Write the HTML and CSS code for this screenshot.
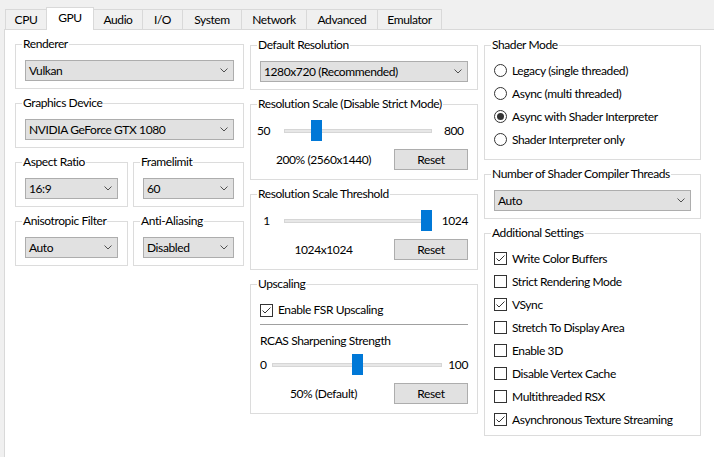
FILE: index.html
```html
<!DOCTYPE html>
<html>
<head>
<meta charset="utf-8">
<link rel="stylesheet" href="styles.css">
</head>
<body>
<div class="tabs">
  <div class="tab w-cpu">CPU</div>
  <div class="tab w-gpu active">GPU</div>
  <div class="tab w-audio">Audio</div>
  <div class="tab w-io">I/O</div>
  <div class="tab w-system">System</div>
  <div class="tab w-network">Network</div>
  <div class="tab w-adv">Advanced</div>
  <div class="tab w-emu">Emulator</div>
</div>
<div class="pane">
  <div class="col c1">
    <fieldset class="grp">
      <legend>Renderer</legend>
      <div class="combo"><span>Vulkan</span><svg class="chev" width="8" height="5" viewBox="0 0 8 5"><polyline points="0.5,0.5 4,4 7.5,0.5"/></svg></div>
    </fieldset>
    <fieldset class="grp">
      <legend>Graphics Device</legend>
      <div class="combo"><span>NVIDIA GeForce GTX 1080</span><svg class="chev" width="8" height="5" viewBox="0 0 8 5"><polyline points="0.5,0.5 4,4 7.5,0.5"/></svg></div>
    </fieldset>
    <div class="pair">
      <fieldset class="grp">
        <legend>Aspect Ratio</legend>
        <div class="combo"><span>16:9</span><svg class="chev" width="8" height="5" viewBox="0 0 8 5"><polyline points="0.5,0.5 4,4 7.5,0.5"/></svg></div>
      </fieldset>
      <fieldset class="grp">
        <legend>Framelimit</legend>
        <div class="combo"><span>60</span><svg class="chev" width="8" height="5" viewBox="0 0 8 5"><polyline points="0.5,0.5 4,4 7.5,0.5"/></svg></div>
      </fieldset>
    </div>
    <div class="pair">
      <fieldset class="grp">
        <legend>Anisotropic Filter</legend>
        <div class="combo"><span>Auto</span><svg class="chev" width="8" height="5" viewBox="0 0 8 5"><polyline points="0.5,0.5 4,4 7.5,0.5"/></svg></div>
      </fieldset>
      <fieldset class="grp">
        <legend>Anti-Aliasing</legend>
        <div class="combo"><span>Disabled</span><svg class="chev" width="8" height="5" viewBox="0 0 8 5"><polyline points="0.5,0.5 4,4 7.5,0.5"/></svg></div>
      </fieldset>
    </div>
  </div>

  <div class="col c2">
    <fieldset class="grp">
      <legend>Default Resolution</legend>
      <div class="combo"><span>1280x720 (Recommended)</span><svg class="chev" width="8" height="5" viewBox="0 0 8 5"><polyline points="0.5,0.5 4,4 7.5,0.5"/></svg></div>
    </fieldset>
    <fieldset class="grp sgrp">
      <legend>Resolution Scale (Disable Strict Mode)</legend>
      <div class="srow">
        <span class="lo">50</span>
        <div class="slider s-res"><div class="track"></div><div class="thumb" style="left:27px"></div></div>
        <span class="hi">800</span>
      </div>
      <div class="brow"><span class="val">200% (2560x1440)</span><div class="btn">Reset</div></div>
    </fieldset>
    <fieldset class="grp sgrp">
      <legend>Resolution Scale Threshold</legend>
      <div class="srow">
        <span class="lo">1</span>
        <div class="slider s-res"><div class="track"></div><div class="thumb" style="left:137px"></div></div>
        <span class="hi">1024</span>
      </div>
      <div class="brow"><span class="val">1024x1024</span><div class="btn">Reset</div></div>
    </fieldset>
    <fieldset class="grp ugrp">
      <legend>Upscaling</legend>
      <div class="chk"><span class="cb"><svg width="11" height="11" viewBox="0 0 11 11"><polyline points="1.5,5.5 4,8 9.5,2.5"/></svg></span>Enable FSR Upscaling</div>
      <div class="sep"></div>
      <div class="cap">RCAS Sharpening Strength</div>
      <div class="srow urow">
        <span class="lo2">0</span>
        <div class="slider s-up"><div class="track"></div><div class="thumb" style="left:80px"></div></div>
        <span class="hi2">100</span>
      </div>
      <div class="brow"><span class="val">50% (Default)</span><div class="btn">Reset</div></div>
    </fieldset>
  </div>

  <div class="col c3">
    <fieldset class="grp rgrp">
      <legend>Shader Mode</legend>
      <div class="opt"><span class="radio"></span>Legacy (single threaded)</div>
      <div class="opt"><span class="radio"></span>Async (multi threaded)</div>
      <div class="opt"><span class="radio on"></span>Async with Shader Interpreter</div>
      <div class="opt"><span class="radio"></span>Shader Interpreter only</div>
    </fieldset>
    <fieldset class="grp">
      <legend>Number of Shader Compiler Threads</legend>
      <div class="combo"><span>Auto</span><svg class="chev" width="8" height="5" viewBox="0 0 8 5"><polyline points="0.5,0.5 4,4 7.5,0.5"/></svg></div>
    </fieldset>
    <fieldset class="grp agrp">
      <legend>Additional Settings</legend>
      <div class="opt"><span class="cb"><svg width="11" height="11" viewBox="0 0 11 11"><polyline points="1.5,5.5 4,8 9.5,2.5"/></svg></span>Write Color Buffers</div>
      <div class="opt"><span class="cb"></span>Strict Rendering Mode</div>
      <div class="opt"><span class="cb"><svg width="11" height="11" viewBox="0 0 11 11"><polyline points="1.5,5.5 4,8 9.5,2.5"/></svg></span>VSync</div>
      <div class="opt"><span class="cb"></span>Stretch To Display Area</div>
      <div class="opt"><span class="cb"></span>Enable 3D</div>
      <div class="opt"><span class="cb"></span>Disable Vertex Cache</div>
      <div class="opt"><span class="cb"></span>Multithreaded RSX</div>
      <div class="opt"><span class="cb"><svg width="11" height="11" viewBox="0 0 11 11"><polyline points="1.5,5.5 4,8 9.5,2.5"/></svg></span>Asynchronous Texture Streaming</div>
    </fieldset>
  </div>
</div>
</body>
</html>
```
FILE: styles.css
```css
html, body {
  margin: 0;
  padding: 0;
}
body {
  background: #f0f0f0;
  font-family: Lato, "Liberation Sans", Arial, sans-serif;
  font-size: 12px;
  letter-spacing: -0.4px;
  line-height: 14px;
  color: #000;
  width: 714px;
  height: 457px;
  overflow: hidden;
}

/* Tabs */
.tabs {
  display: flex;
  align-items: flex-end;
  padding: 7px 0 0 5px;
  height: 22px;
}
.tab {
  box-sizing: border-box;
  height: 20px;
  border: 1px solid #d9d9d9;
  border-bottom: 0;
  background: #f0f0f0;
  margin-left: -1px;
  display: flex;
  align-items: center;
  justify-content: center;
  white-space: nowrap;
}
.tab:first-child { margin-left: 0; }
.tab.active {
  height: 23px;
  background: #fff;
  margin-bottom: -1px;
  padding-bottom: 2px;
  position: relative;
  z-index: 1;
}
.w-cpu { width: 42px; }
.w-gpu { width: 48px; }
.w-audio { width: 50px; }
.w-io { width: 41px; }
.w-system { width: 60px; }
.w-network { width: 66px; }
.w-adv { width: 72px; }
.w-emu { width: 65px; }

/* Pane */
.pane {
  box-sizing: border-box;
  margin-left: 4px;
  width: 710px;
  height: 428px;
  border: 1px solid #d9d9d9;
  border-right: 0;
  border-bottom: 0;
  background: #fff;
  display: flex;
  align-items: flex-start;
  gap: 6px;
  padding: 7px 0 0 10px;
}
.col {
  display: flex;
  flex-direction: column;
  gap: 7px;
}
.c1 { width: 229px; }
.c2 { width: 228px; padding-top: 1px; }
.c3 { width: 217px; padding-top: 1px; }

.pair {
  display: grid;
  grid-template-columns: 113px 1fr;
  gap: 5px;
}

/* Group boxes */
.grp {
  margin: 0;
  min-width: 0;
  border: 1px solid #dcdcdc;
  padding: 9px 9px 7px;
}
.grp legend {
  padding: 0 1px;
  margin-left: -3px;
  line-height: 14px;
  white-space: nowrap;
}

/* Combo */
.combo {
  box-sizing: border-box;
  height: 21px;
  border: 1px solid #adadad;
  background: #e1e1e1;
  display: flex;
  align-items: center;
  justify-content: space-between;
  padding: 0 5px 0 3px;
  white-space: nowrap;
}
.chev polyline {
  fill: none;
  stroke: #505050;
  stroke-width: 1;
}

/* Sliders */
.sgrp { padding: 9px 9px 9px; }
.srow {
  display: flex;
  align-items: center;
  height: 22px;
}
.lo {
  width: 10px;
  display: flex;
  justify-content: flex-end;
  white-space: nowrap;
}
.hi { margin-left: 12px; }
.lo2 { width: 7px; }
.hi2 { margin-left: 6px; }
.slider {
  position: relative;
  height: 22px;
  display: flex;
  align-items: center;
}
.s-res { width: 148px; margin-left: 14px; }
.s-up { width: 172px; margin-left: 5px; }
.track {
  box-sizing: border-box;
  width: 100%;
  height: 4px;
  background: #e7e7e7;
  border: 1px solid #d6d6d6;
}
.thumb {
  position: absolute;
  top: 0;
  width: 11px;
  height: 21px;
  background: #0078d7;
}
.brow {
  display: flex;
  gap: 7px;
  margin-top: 7px;
  height: 21px;
}
.val {
  flex: 1;
  display: flex;
  align-items: center;
  justify-content: center;
  white-space: nowrap;
}
.btn {
  box-sizing: border-box;
  width: 74px;
  height: 21px;
  border: 1px solid #adadad;
  background: #e1e1e1;
  display: flex;
  align-items: center;
  justify-content: center;
}

/* Upscaling */
.ugrp { padding: 10px 9px 9px; }
.chk {
  display: flex;
  align-items: center;
  height: 18px;
  white-space: nowrap;
}
.sep {
  margin-top: 5px;
  height: 1px;
  background: #a0a0a0;
}
.cap {
  margin-top: 9px;
  line-height: 14px;
}
.urow { margin-top: 6px; }

/* Options */
.rgrp { padding: 7px 9px 8px; }
.agrp { padding: 7px 9px 4px; }
.opt {
  display: flex;
  align-items: center;
  height: 23px;
  white-space: nowrap;
}
.radio {
  box-sizing: border-box;
  width: 13px;
  height: 13px;
  border: 1px solid #333;
  border-radius: 50%;
  background: #fff;
  margin-right: 5px;
  display: flex;
  align-items: center;
  justify-content: center;
  flex: none;
}
.radio.on::after {
  content: "";
  width: 7px;
  height: 7px;
  border-radius: 50%;
  background: #333;
}
.cb {
  box-sizing: border-box;
  width: 13px;
  height: 13px;
  border: 1px solid #333;
  background: #fff;
  margin-right: 5px;
  flex: none;
  display: flex;
}
.cb svg polyline {
  fill: none;
  stroke: #333;
  stroke-width: 1;
}
```
